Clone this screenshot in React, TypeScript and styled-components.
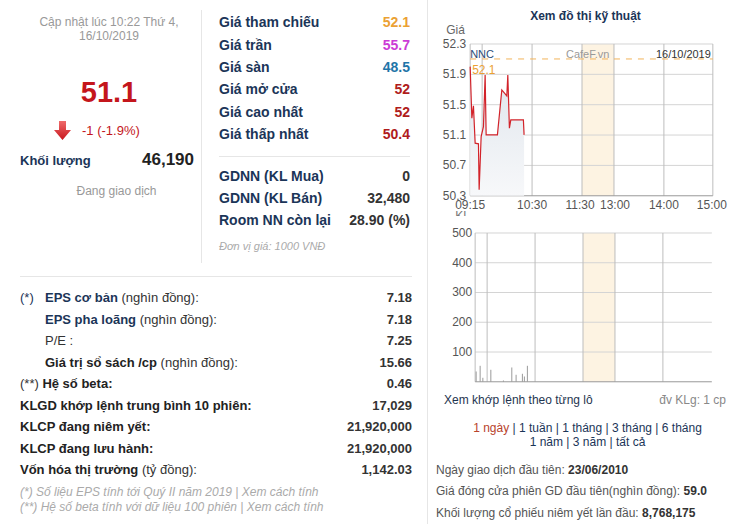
import React from "react";
import styled, { createGlobalStyle } from "styled-components";

const NAVY = "#1b3558";
const DARK = "#333";
const RED = "#c4161c";

const GlobalStyle = createGlobalStyle`
  body {
    margin: 0;
    background: #fff;
    font-family: "Liberation Sans", Arial, sans-serif;
  }
`;

const Page = styled.div`
  display: flex;
  width: 755px;
  height: 524px;
  overflow: hidden;
  background: #fff;
`;

const LeftCol = styled.div`
  width: 427px;
  flex-shrink: 0;
`;

const TopRow = styled.div`
  display: flex;
  align-items: flex-start;
  height: 276px;
`;

const QuoteBox = styled.div`
  box-sizing: border-box;
  width: 202px;
  height: 253px;
  margin-top: 10px;
  padding: 5px 7px 0 20px;
  border-right: 1px solid #e6e6e6;
`;

const UpdateText = styled.div`
  color: #999;
  font-size: 12px;
  line-height: 14px;
  text-align: center;
  padding-left: 4px;
`;

const BigPrice = styled.div`
  margin-top: 33px;
  color: ${RED};
  font-size: 29px;
  font-weight: bold;
  line-height: 32px;
  text-align: center;
  padding-left: 4px;
`;

const ChangeRow = styled.div`
  display: flex;
  align-items: center;
  gap: 11px;
  margin-top: 13px;
  padding-left: 34px;
  height: 19px;
  color: ${RED};
  font-size: 13px;
`;

const VolumeRow = styled.div`
  display: flex;
  justify-content: space-between;
  align-items: center;
  margin-top: 10px;
  height: 20px;
`;

const VolumeLabel = styled.span`
  color: ${NAVY};
  font-size: 13px;
  font-weight: bold;
`;

const VolumeValue = styled.span`
  color: #222;
  font-size: 17px;
  font-weight: bold;
`;

const Status = styled.div`
  margin-top: 14px;
  color: #999;
  font-size: 12px;
  line-height: 14px;
  text-align: center;
  padding-left: 19px;
`;

const PriceBox = styled.div`
  box-sizing: border-box;
  width: 225px;
  padding: 11px 17px 0 17px;
`;

const PriceRow = styled.div`
  display: flex;
  justify-content: space-between;
  align-items: center;
  height: 22.4px;
  font-size: 14px;
  font-weight: bold;
  color: ${NAVY};
`;

const PriceValue = styled.span<{ $color: string }>`
  color: ${(p) => p.$color};
`;

const ThinRule = styled.div`
  border-top: 1px solid #e6e6e6;
  margin: 11px 0 7px;
`;

const UnitNote = styled.div`
  margin-top: 8px;
  color: #aaa;
  font-size: 11px;
  font-style: italic;
  line-height: 13px;
`;

const HRule = styled.div`
  border-top: 1px solid #e6e6e6;
  margin: 0 15px 0 20px;
`;

const StatsTable = styled.div`
  margin-top: 10px;
  padding: 0 15px 0 20px;
`;

const StatRow = styled.div<{ $indent?: boolean }>`
  display: flex;
  justify-content: space-between;
  align-items: center;
  height: 21.5px;
  padding-left: ${(p) => (p.$indent ? "25px" : "0")};
  font-size: 13px;
  color: ${DARK};
`;

const Prefix = styled.span`
  display: inline-block;
  width: 25px;
  color: ${NAVY};
`;

const Strong = styled.b<{ $navy?: boolean }>`
  color: ${(p) => (p.$navy ? NAVY : "#222")};
`;

const StatValue = styled.span`
  font-weight: bold;
  color: ${DARK};
`;

const Footnotes = styled.div`
  margin-top: 4px;
  padding-left: 20px;
  color: #aaa;
  font-size: 12px;
  font-style: italic;
  line-height: 15px;
`;

const RightCol = styled.div`
  flex: 1;
  border-left: 1px solid #e6e6e6;
  display: flex;
  flex-direction: column;
`;

const ChartTitle = styled.div`
  padding: 8px 12px 0 0;
  height: 16px;
  line-height: 16px;
  text-align: center;
  color: ${NAVY};
  font-size: 12px;
  font-weight: bold;
`;

const ChartSvg = styled.svg`
  display: block;
  font-family: "Liberation Sans", Arial, sans-serif;
`;

const ChartFooter = styled.div`
  display: flex;
  justify-content: space-between;
  align-items: center;
  height: 16px;
  padding: 0 29px 0 16px;
  font-size: 12px;
`;

const FooterLink = styled.span`
  color: #1f3550;
`;

const FooterUnit = styled.span`
  color: #888;
`;

const Periods = styled.div`
  margin-top: 13px;
  padding-right: 8px;
  text-align: center;
  font-size: 12px;
  line-height: 14px;
  color: ${NAVY};
`;

const Period = styled.span<{ $active?: boolean }>`
  color: ${(p) => (p.$active ? "#b8432b" : NAVY)};
`;

const InfoList = styled.div`
  margin-top: 11px;
  padding-left: 8px;
  font-size: 12px;
  color: #555;
`;

const InfoRow = styled.div`
  height: 21.5px;
  line-height: 21.5px;
`;

const InfoValue = styled.b`
  color: #333;
`;

const DownArrow = () => (
  <svg width="17" height="19" viewBox="0 0 17 19">
    <defs>
      <linearGradient id="arrowGrad" x1="0" y1="0" x2="0" y2="1">
        <stop offset="0" stopColor="#ef6b6b" />
        <stop offset="1" stopColor="#c8161d" />
      </linearGradient>
    </defs>
    <path d="M5 0h7v9h5l-8.5 10L0 9h5z" fill="url(#arrowGrad)" />
  </svg>
);

const priceRows = [
  { label: "Giá tham chiếu", value: "52.1", color: "#eba133" },
  { label: "Giá trần", value: "55.7", color: "#cc3bd6" },
  { label: "Giá sàn", value: "48.5", color: "#1f75a8" },
  { label: "Giá mở cửa", value: "52", color: "#b01c1c" },
  { label: "Giá cao nhất", value: "52", color: "#b01c1c" },
  { label: "Giá thấp nhất", value: "50.4", color: "#b01c1c" },
];

const foreignRows = [
  { label: "GDNN (KL Mua)", value: "0" },
  { label: "GDNN (KL Bán)", value: "32,480" },
  { label: "Room NN còn lại", value: "28.90 (%)" },
];

// price line, page coords
const pricePts: [number, number][] = [
  [470, 66.7], [471.7, 118.3], [473.3, 106], [475, 143.3], [478.3, 144],
  [479, 190], [481, 136.7], [483.3, 126.7], [485, 75], [486, 135],
  [497.3, 135], [501.7, 90], [506.7, 96], [507.7, 75], [509.3, 128.3],
  [510.7, 120], [523.3, 120], [524, 135],
];

const priceY = [
  { v: "52.3", y: 44 },
  { v: "51.9", y: 74.4 },
  { v: "51.5", y: 104.8 },
  { v: "51.1", y: 135.2 },
  { v: "50.7", y: 165.6 },
  { v: "50.3", y: 196 },
];

const timeX = [
  { t: "09:15", x: 470 },
  { t: "10:30", x: 532 },
  { t: "11:30", x: 580 },
  { t: "13:00", x: 615 },
  { t: "14:00", x: 664 },
  { t: "15:00", x: 712 },
];

const volY = [
  { v: "500", y: 233 },
  { v: "400", y: 262.8 },
  { v: "300", y: 292.6 },
  { v: "200", y: 322.4 },
  { v: "100", y: 352.2 },
];

const volBars: [number, number][] = [
  [476, 371.7], [480, 366], [482.7, 378], [490.7, 370], [503.3, 380.7],
  [511.7, 367.7], [516, 375], [522.3, 374], [524.3, 376.7], [527.3, 366],
];

const PriceChart = () => {
  const line = pricePts.map((p) => p.join(",")).join(" ");
  const area = `${line} 524,196 470,196`;
  return (
    <ChartSvg width={327} height={192} viewBox="428 24 327 192">
      <defs>
        <linearGradient id="areaGrad" x1="0" y1="0" x2="0" y2="1">
          <stop offset="0" stopColor="#dfe5ec" />
          <stop offset="1" stopColor="#f7f8fa" />
        </linearGradient>
      </defs>
      <rect x={582} y={44} width={32} height={152} fill="#fdf3e2" />
      {priceY.slice(0, 5).map((r) => (
        <line key={r.v} x1={470} x2={713} y1={r.y} y2={r.y} stroke="#d4d4d4" />
      ))}
      {[482, 532, 582, 614, 664, 713].map((x) => (
        <line key={x} x1={x} x2={x} y1={44} y2={196} stroke="#bdbdbd" />
      ))}
      <line x1={470} x2={470} y1={44} y2={196} stroke="#bdbdbd" />
      <line x1={470} x2={713} y1={196} y2={196} stroke="#999" />
      <line x1={470} x2={713} y1={59} y2={59} stroke="#f2b458" strokeDasharray="6 6" />
      <polygon points={area} fill="url(#areaGrad)" />
      <polyline points={line} fill="none" stroke="#d2232a" strokeWidth={1.2} />
      <text x={470} y={58} fontSize={11} fill="#2b4d78">NNC</text>
      <text x={566} y={58} fontSize={11} fill="#999">CafeF.vn</text>
      <text x={711} y={58} fontSize={11} fill="#333" textAnchor="end">16/10/2019</text>
      <text x={472} y={74} fontSize={12} fill="#eba133">52.1</text>
      <text x={446} y={34} fontSize={12} fill="#666">Giá</text>
      {priceY.map((r) => (
        <text key={r.v} x={466} y={r.y + 4} fontSize={12} fill="#555" textAnchor="end">
          {r.v}
        </text>
      ))}
      {timeX.map((t) => (
        <text key={t.t} x={t.x} y={209} fontSize={12} fill="#555" textAnchor="middle">
          {t.t}
        </text>
      ))}
      <text x={455} y={220} fontSize={12} fill="#777">KL</text>
    </ChartSvg>
  );
};

const VolumeChart = () => (
  <ChartSvg width={327} height={176} viewBox="428 216 327 176">
    <rect x={583} y={233} width={32} height={149} fill="#fdf3e2" />
    {volY.map((r) => (
      <line key={r.v} x1={475} x2={712} y1={r.y} y2={r.y} stroke="#d4d4d4" />
    ))}
    {[487, 535, 583, 615, 663].map((x) => (
      <line key={x} x1={x} x2={x} y1={233} y2={382} stroke="#bdbdbd" />
    ))}
    <line x1={475} x2={475} y1={233} y2={382} stroke="#bdbdbd" />
    {volBars.map(([x, top]) => (
      <line key={x} x1={x} x2={x} y1={top} y2={382} stroke="#9a9a9a" />
    ))}
    <line x1={475} x2={712} y1={382} y2={382} stroke="#999" />
    {volY.map((r) => (
      <text key={r.v} x={472} y={r.y + 4} fontSize={12} fill="#555" textAnchor="end">
        {r.v}
      </text>
    ))}
  </ChartSvg>
);

const App: React.FC = () => {
  return (
    <Page>
      <GlobalStyle />
      <LeftCol>
        <TopRow>
          <QuoteBox>
            <UpdateText>
              Cập nhật lúc 10:22 Thứ 4,
              <br />
              16/10/2019
            </UpdateText>
            <BigPrice>51.1</BigPrice>
            <ChangeRow>
              <DownArrow />
              <span>-1 (-1.9%)</span>
            </ChangeRow>
            <VolumeRow>
              <VolumeLabel>Khối lượng</VolumeLabel>
              <VolumeValue>46,190</VolumeValue>
            </VolumeRow>
            <Status>Đang giao dịch</Status>
          </QuoteBox>

          <PriceBox>
            {priceRows.map((r) => (
              <PriceRow key={r.label}>
                <span>{r.label}</span>
                <PriceValue $color={r.color}>{r.value}</PriceValue>
              </PriceRow>
            ))}
            <ThinRule />
            {foreignRows.map((r) => (
              <PriceRow key={r.label}>
                <span>{r.label}</span>
                <PriceValue $color={DARK}>{r.value}</PriceValue>
              </PriceRow>
            ))}
            <UnitNote>Đơn vị giá: 1000 VNĐ</UnitNote>
          </PriceBox>
        </TopRow>

        <HRule />

        <StatsTable>
          <StatRow>
            <span>
              <Prefix>(*)</Prefix>
              <Strong $navy>EPS cơ bản</Strong> (nghìn đồng):
            </span>
            <StatValue>7.18</StatValue>
          </StatRow>
          <StatRow $indent>
            <span>
              <Strong $navy>EPS pha loãng</Strong> (nghìn đồng):
            </span>
            <StatValue>7.18</StatValue>
          </StatRow>
          <StatRow $indent>
            <span>P/E :</span>
            <StatValue>7.25</StatValue>
          </StatRow>
          <StatRow $indent>
            <span>
              <Strong>Giá trị sổ sách /cp</Strong> (nghìn đồng):
            </span>
            <StatValue>15.66</StatValue>
          </StatRow>
          <StatRow>
            <span>
              (**) <Strong>Hệ số beta:</Strong>
            </span>
            <StatValue>0.46</StatValue>
          </StatRow>
          <StatRow>
            <Strong>KLGD khớp lệnh trung bình 10 phiên:</Strong>
            <StatValue>17,029</StatValue>
          </StatRow>
          <StatRow>
            <Strong>KLCP đang niêm yết:</Strong>
            <StatValue>21,920,000</StatValue>
          </StatRow>
          <StatRow>
            <Strong>KLCP đang lưu hành:</Strong>
            <StatValue>21,920,000</StatValue>
          </StatRow>
          <StatRow>
            <span>
              <Strong>Vốn hóa thị trường</Strong> (tỷ đồng):
            </span>
            <StatValue>1,142.03</StatValue>
          </StatRow>
        </StatsTable>

        <Footnotes>
          (*) Số liệu EPS tính tới Quý II năm 2019 | Xem cách tính
          <br />
          (**) Hệ số beta tính với dữ liệu 100 phiên | Xem cách tính
        </Footnotes>
      </LeftCol>

      <RightCol>
        <ChartTitle>Xem đồ thị kỹ thuật</ChartTitle>
        <PriceChart />
        <VolumeChart />
        <ChartFooter>
          <FooterLink>Xem khớp lệnh theo từng lô</FooterLink>
          <FooterUnit>đv KLg: 1 cp</FooterUnit>
        </ChartFooter>
        <Periods>
          <Period $active>1 ngày</Period> | <Period>1 tuần</Period> |{" "}
          <Period>1 tháng</Period> | <Period>3 tháng</Period> |{" "}
          <Period>6 tháng</Period>
          <br />
          <Period>1 năm</Period> | <Period>3 năm</Period> | <Period>tất cả</Period>
        </Periods>
        <InfoList>
          <InfoRow>
            Ngày giao dịch đầu tiên: <InfoValue>23/06/2010</InfoValue>
          </InfoRow>
          <InfoRow>
            Giá đóng cửa phiên GD đầu tiên(nghìn đồng): <InfoValue>59.0</InfoValue>
          </InfoRow>
          <InfoRow>
            Khối lượng cổ phiếu niêm yết lần đầu: <InfoValue>8,768,175</InfoValue>
          </InfoRow>
        </InfoList>
      </RightCol>
    </Page>
  );
};

export default App;
